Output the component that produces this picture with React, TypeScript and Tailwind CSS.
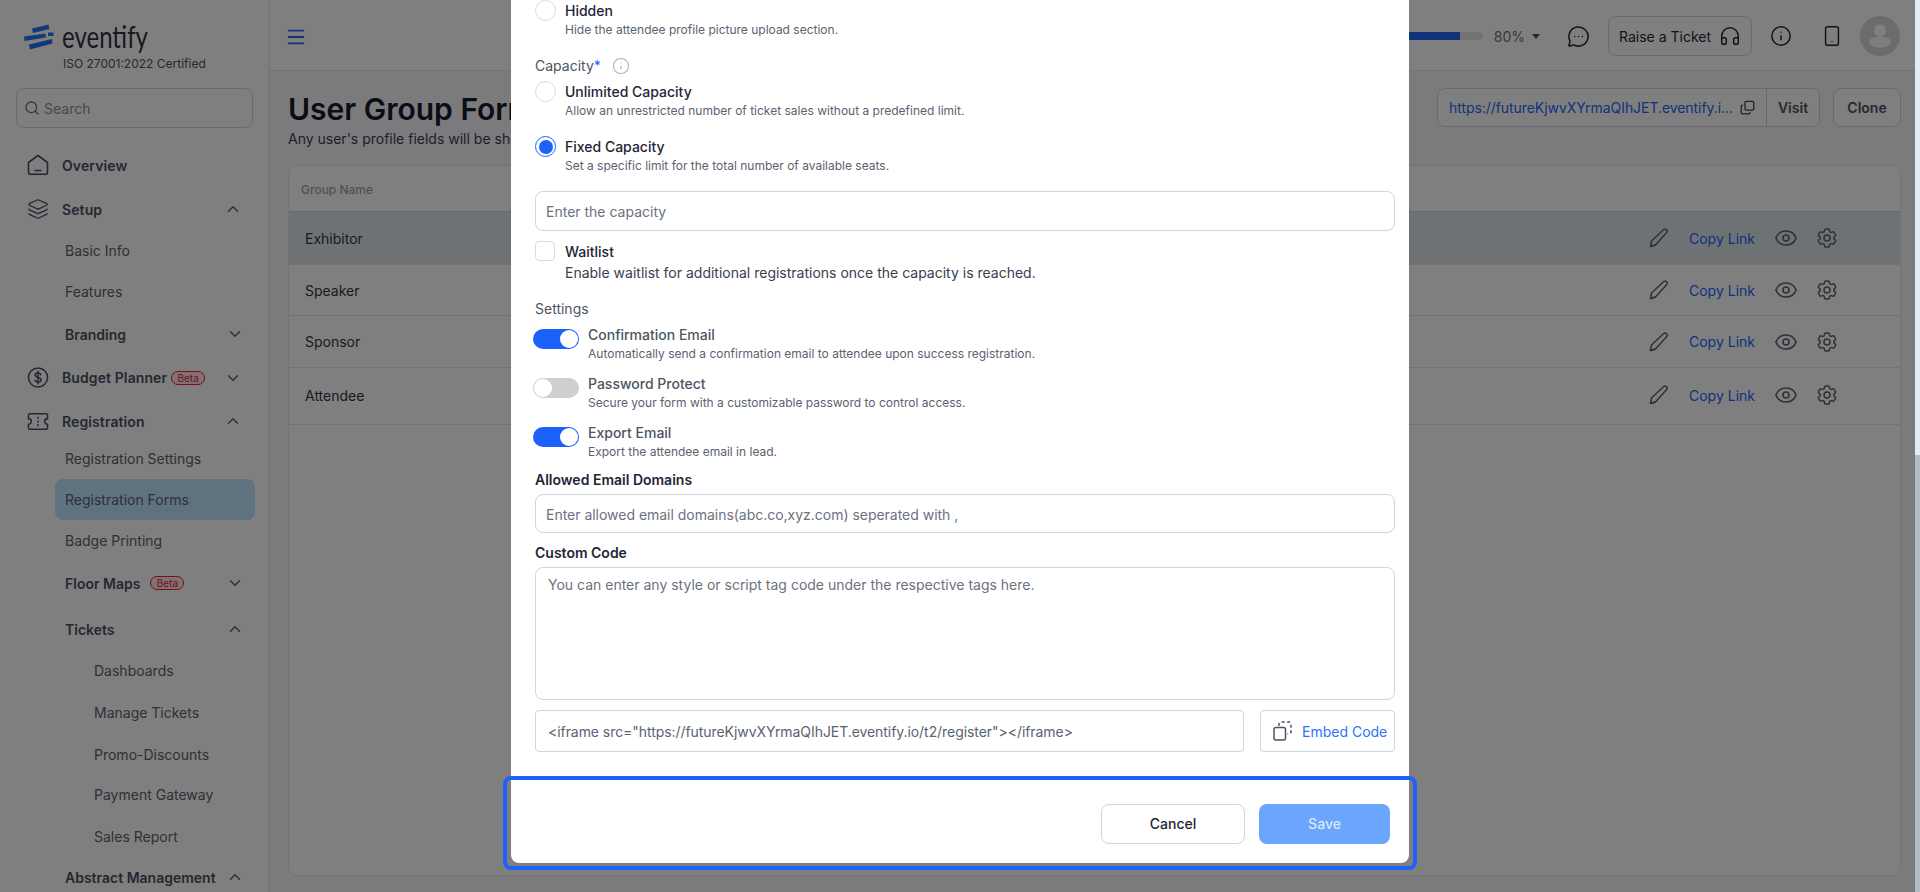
import { ChevronDown, ChevronUp, Copy, Eye, Headphones, Info, Layers, Menu, MessageCircleMore, Search, Smartphone } from "lucide-react";
import { HiOutlineCog6Tooth } from "react-icons/hi2";

function HomeIcon() {
	return (
		<svg width="22" height="22" viewBox="0 0 22 22" fill="none" stroke="#4a5164" strokeWidth="1.6" strokeLinejoin="round" strokeLinecap="round">
			<path d="M1.5 8.5 11 1.5l9.500 7v9.800a2 2 0 0 1-2 2h-15a2 2 0 0 1-2-2z" />
			<path d="M8 16.500h6" />
		</svg>
	);
}

function TicketIcon() {
	return (
		<svg width="23" height="19" viewBox="0 0 23 19" fill="none" stroke="#4a5164" strokeWidth="1.6" strokeLinejoin="round" strokeLinecap="round">
			<path d="M3 1.500h17a1.500 1.500 0 0 1 1.500 1.500v3.500a3 3 0 0 0 0 6V16a1.500 1.500 0 0 1-1.500 1.500H3A1.500 1.500 0 0 1 1.500 16v-3.500a3 3 0 0 0 0-6V3A1.500 1.500 0 0 1 3 1.500z" />
			<path d="M11.500 5v1M11.500 9v1M11.500 13v1" />
		</svg>
	);
}

function Logo() {
	return (
		<svg width="30" height="26" viewBox="0 0 30 26" fill="#2572f5">
			<polygon points="8,4.500 24.500,0.500 25.500,5 9,9" />
			<polygon points="0,12.500 21.500,9.500 22,13.500 0.500,17" />
			<polygon points="24,8.500 29.500,8.500 29.500,12 24,12" />
			<polygon points="5,20.500 28,15 28.500,19.500 6,25.500" />
		</svg>
	);
}

function PencilIcon() {
	return (
		<svg width="20" height="20" viewBox="0 0 20 20" fill="none" stroke="#5c6270" strokeWidth="1.500" strokeLinejoin="round">
			<path d="M1.500 18.500 2.500 13 14.500 1.700c.9-.8 2.200-.8 3 0 .8.900.8 2.200 0 3L6.500 17z" />
			<path d="M1.500 18.500 6.500 17" />
		</svg>
	);
}

function EmbedIcon() {
	return (
		<svg width="19" height="20" viewBox="0 0 19 20" fill="none" stroke="#4b5563" strokeWidth="1.500" strokeLinejoin="round">
			<rect x="1" y="6.500" width="11.500" height="12.500" rx="2" />
			<path d="M6 5V3a2 2 0 0 1 2-2h8a2 2 0 0 1 2 2v8a2 2 0 0 1-2 2h-1.500" strokeDasharray="3 2.500" />
		</svg>
	);
}

function Avatar() {
	return (
		<div className="w-[40px] h-[40px] rounded-full bg-[#d8d9dd] flex items-center justify-center overflow-hidden">
			<svg width="40" height="40" viewBox="0 0 40 40">
				<circle cx="20" cy="14.500" r="6" fill="#ffffff" />
				<ellipse cx="20" cy="26" rx="11" ry="5.500" fill="#ffffff" />
			</svg>
		</div>
	);
}

function Beta() {
	return <span className="ml-[4px] h-[14px] w-[34px] rounded-full border border-[#ef1c2e] bg-[#ffe4e6] text-[#ef1c2e] text-[10px] leading-[12px] text-center">Beta</span>;
}

function NavTop({ h, label, icon, open, beta }: { h: string; label: string; icon: React.ReactNode; open?: boolean; beta?: boolean }) {
	return (
		<div className={`${h} flex items-center pl-[27px] pr-[26px]`}>
			<div className="w-[22px] flex justify-center">{icon}</div>
			<span className="ml-[13px] text-[14px] font-semibold text-[#4a5164] tracking-[0.1px]">{label}</span>
			{beta && <Beta />}
			{open === true && <ChevronUp className="ml-auto" size={18} color="#5c6270" />}
			{open === false && <ChevronDown className="ml-auto" size={18} color="#5c6270" />}
		</div>
	);
}

function NavSub({ h, label, bold, open, beta, deep }: { h: string; label: string; bold?: boolean; open?: boolean; beta?: boolean; deep?: boolean }) {
	return (
		<div className={`${h} flex items-center ${deep ? "pl-[94px]" : "pl-[65px]"} pr-[24px]`}>
			<span className={`text-[14px] ${bold ? "font-semibold text-[#4a5164]" : "text-[#5c6270]"}`}>{label}</span>
			{beta && <span className="ml-[6px] flex"><Beta /></span>}
			{open === true && <ChevronUp className="ml-auto" size={18} color="#5c6270" />}
			{open === false && <ChevronDown className="ml-auto" size={18} color="#5c6270" />}
		</div>
	);
}

function Sidebar() {
	return (
		<aside className="w-[270px] shrink-0 h-full border-r-2 border-[#f0f0f4] bg-white overflow-hidden">
			<div className="h-[88px] pl-[24px] pt-[24px]">
				<div className="flex items-center gap-[8px] h-[26px]">
					<Logo />
					<span className="[font-family:Lato,sans-serif] text-[30px] leading-[26px] text-[#2f3442] origin-left scale-x-[0.8] -mt-[2px]">eventify</span>
				</div>
				<div className="ml-[39px] mt-[6px] text-[12px] leading-[16px] text-[#4a5164]">ISO 27001:2022 Certified</div>
			</div>
			<div className="mx-[16px] h-[40px] w-[237px] rounded-lg border border-[#d1d5db] flex items-center pl-[7px] gap-[4px]">
				<Search size={16} color="#6b7280" />
				<span className="text-[14px] text-[#8b919c]">Search</span>
			</div>
			<div className="mt-[19px]">
				<NavTop h="h-[36px]" label="Overview" icon={<HomeIcon />} />
				<NavTop h="h-[52px]" label="Setup" icon={<Layers size={26} color="#4a5164" strokeWidth={1.4} />} open />
				<NavSub h="h-[30px]" label="Basic Info" />
				<NavSub h="h-[52px]" label="Features" />
				<NavSub h="h-[34px]" label="Branding" bold open={false} />
				<NavTop h="h-[53px]" label="Budget Planner" icon={<svg width="23" height="23" viewBox="0 0 23 23" fill="none" stroke="#4a5164" strokeWidth="1.6" strokeLinecap="round"><circle cx="11.500" cy="11.500" r="10" /><path d="M14.500 8.500c-.5-1.200-1.600-1.800-3-1.800-1.800 0-3 .9-3 2.300 0 3.200 6.200 1.600 6.200 4.900 0 1.400-1.300 2.400-3.200 2.400-1.500 0-2.700-.7-3.200-1.900M11.500 5v13" /></svg>} beta open={false} />
				<NavTop h="h-[34px]" label="Registration" icon={<TicketIcon />} open />
				<NavSub h="h-[40px]" label="Registration Settings" />
				<div className="ml-[55px] mr-[13px] mt-[1px] h-[41px] rounded-lg bg-[#bfe5ff] pl-[10px] flex items-center text-[14px] text-[#5c6270]">Registration Forms</div>
				<NavSub h="h-[40px]" label="Badge Printing" />
				<NavSub h="h-[46px]" label="Floor Maps" bold beta open={false} />
				<NavSub h="h-[46px]" label="Tickets" bold open />
				<NavSub h="h-[36px]" label="Dashboards" deep />
				<NavSub h="h-[48px]" label="Manage Tickets" deep />
				<NavSub h="h-[36px]" label="Promo-Discounts" deep />
				<NavSub h="h-[44px]" label="Payment Gateway" deep />
				<NavSub h="h-[40px]" label="Sales Report" deep />
				<NavSub h="h-[42px]" label="Abstract Management" bold open />
			</div>
		</aside>
	);
}

function Header() {
	return (
		<div className="h-[71px] shrink-0 border-b border-[#e5e7eb] bg-white flex items-center pt-[2px] pl-[15px] pr-[15px]">
			<Menu className="mt-[1px]" size={22} color="#2266f5" />
			<div className="ml-auto w-[200px] h-[8px] rounded-full bg-[#e5e7eb] overflow-hidden">
				<div className="w-[177px] h-full bg-[#2266f5]" />
			</div>
			<span className="ml-[11px] text-[14px] text-[#6b7280]">80%</span>
			<span className="ml-[7px] w-0 h-0 border-x-[4px] border-x-transparent border-t-[5px] border-t-[#4b5563]" />
			<MessageCircleMore className="ml-[27px]" size={23} color="#1f2937" strokeWidth={1.6} />
			<div className="ml-[18px] w-[144px] h-[40px] rounded-lg border border-[#d1d5db] flex items-center pl-[10px] gap-[8px] text-[14px] text-[#1f2937]">
				Raise a Ticket
				<Headphones size={22} color="#1f2937" strokeWidth={1.6} />
			</div>
			<Info className="ml-[18px]" size={22} color="#1f2937" strokeWidth={1.6} />
			<Smartphone className="ml-[29px]" size={22} color="#1f2937" strokeWidth={1.6} />
			<div className="ml-[17px]"><Avatar /></div>
		</div>
	);
}

function TableRow({ name, h, active, cls }: { name: string; h: string; active?: boolean; cls?: string }) {
	return (
		<div className={`${h} ${cls ?? ""} flex items-center pl-[16px] pr-[61px] border-b border-[#e5e7eb] ${active ? "bg-[#dce4ea]" : ""}`}>
			<span className="text-[14px] text-[#2f3745]">{name}</span>
			<div className="ml-auto"><PencilIcon /></div>
			<span className="ml-[20px] text-[14px] text-[#2266f5]">Copy Link</span>
			<Eye className="ml-[19px]" size={24} color="#5c6270" strokeWidth={1.6} />
			<HiOutlineCog6Tooth className="ml-[17px] text-[#5c6270]" size={24} />
		</div>
	);
}

function Main() {
	return (
		<div className="flex-1 min-w-0 h-full flex flex-col bg-[#f7f7fa]">
			<Header />
			<div className="flex-1 pl-[18px] pr-[14px]">
				<div className="h-[94px] flex">
					<div className="pt-[19px]">
						<h1 className="text-[30px] leading-[38px] font-semibold text-[#141a2a]">User Group Forms</h1>
						<p className="mt-[1px] text-[14px] leading-[20px] text-[#374151]">Any user's profile fields will be shown here.</p>
					</div>
					<div className="ml-auto mt-[17px] flex gap-[13px]">
						<div className="h-[39px] w-[383px] rounded-lg border border-[#d1d5db] bg-white flex items-center pl-[11px]">
							<span className="text-[14px] text-[#2266f5] tracking-[-0.06px]">https://futureKjwvXYrmaQIhJET.eventify.i...</span>
							<Copy className="ml-[7px] -scale-y-100" size={15} color="#374151" />
							<span className="ml-auto w-[53px] h-full border-l border-[#d1d5db] flex items-center justify-center text-[14px] font-semibold text-[#4b5563]">Visit</span>
						</div>
						<div className="h-[39px] w-[68px] rounded-lg border border-[#d1d5db] bg-white flex items-center justify-center text-[14px] font-semibold text-[#4b5563]">Clone</div>
					</div>
				</div>
				<div className="h-[711px] rounded-lg border border-[#e5e7eb] bg-white">
					<div className="h-[46px] flex items-center pl-[12px] pt-[2px] border-b border-[#d1d5db] text-[12px] font-medium text-[#9ca3af]">Group Name</div>
					<TableRow name="Exhibitor" h="h-[53px]" active />
					<TableRow name="Speaker" h="h-[51px]" />
					<TableRow name="Sponsor" h="h-[52px]" />
					<TableRow name="Attendee" h="h-[57px]" cls="pb-[2px]" />
				</div>
			</div>
		</div>
	);
}

function Radio({ on }: { on?: boolean }) {
	return (
		<span className={`w-[21px] h-[21px] shrink-0 rounded-full border-[1.5px] flex items-center justify-center ${on ? "border-[#1c62fa]" : "border-[#d7dbe4]"}`}>
			{on && <span className="w-[14px] h-[14px] rounded-full bg-[#1c62fa]" />}
		</span>
	);
}

function RadioRow({ title, desc, on, cls }: { title: string; desc: string; on?: boolean; cls: string }) {
	return (
		<div className={`flex gap-[9px] ${cls}`}>
			<Radio on={on} />
			<div>
				<div className="text-[14px] leading-[22px] font-medium text-[#1e2636]">{title}</div>
				<div className="text-[12px] leading-[15px] text-[#5b6270]">{desc}</div>
			</div>
		</div>
	);
}

function ToggleRow({ title, desc, on, cls }: { title: string; desc: string; on?: boolean; cls: string }) {
	return (
		<div className={`flex gap-[9px] -ml-[2px] ${cls}`}>
			<span className={`mt-[4px] w-[46px] h-[20px] rounded-full flex items-center px-[1px] ${on ? "bg-[#1c62fa] justify-end" : "bg-[#cfcfcf]"}`}>
				<span className="w-[18px] h-[18px] rounded-full bg-white" />
			</span>
			<div>
				<div className="text-[14px] leading-[20px] font-medium text-[#4b5563]">{title}</div>
				<div className="text-[12px] leading-[18px] text-[#5b6270]">{desc}</div>
			</div>
		</div>
	);
}

function Modal() {
	return (
		<div className="absolute left-[511px] top-0 w-[898px] h-[863px] bg-white rounded-b-lg overflow-hidden">
			<div className="pl-[24px] pr-[14px]">
				<RadioRow title="Hidden" desc="Hide the attendee profile picture upload section." cls="" />
				<div className="mt-[19px] flex items-center text-[14px] leading-[20px] text-[#4b5563]">
					Capacity<span className="text-[#1c62fa]">*</span>
					<Info className="ml-[11px]" size={18} color="#a9b4c6" strokeWidth={1.5} />
				</div>
				<RadioRow title="Unlimited Capacity" desc="Allow an unrestricted number of ticket sales without a predefined limit." cls="mt-[5px]" />
				<RadioRow title="Fixed Capacity" desc="Set a specific limit for the total number of available seats." on cls="mt-[18px]" />
				<div className="mt-[18px] h-[40px] rounded-lg border border-[#d1d5e0] flex items-center pl-[10px] text-[14px] text-[#6b7280]">Enter the capacity</div>
				<div className="mt-[10px] flex gap-[10px]">
					<span className="w-[20px] h-[20px] rounded border border-[#d7dbe4]" />
					<div>
						<div className="text-[14px] leading-[22px] font-medium text-[#1e2636]">Waitlist</div>
						<div className="text-[14px] leading-[20px] text-[#374151]">Enable waitlist for additional registrations once the capacity is reached.</div>
					</div>
				</div>
				<div className="mt-[16px] text-[14px] leading-[20px] text-[#4b5563]">Settings</div>
				<ToggleRow title="Confirmation Email" desc="Automatically send a confirmation email to attendee upon success registration." on cls="mt-[6px]" />
				<ToggleRow title="Password Protect" desc="Secure your form with a customizable password to control access." cls="mt-[11px]" />
				<ToggleRow title="Export Email" desc="Export the attendee email in lead." on cls="mt-[11px]" />
				<div className="mt-[9px] text-[14px] leading-[20px] font-semibold text-[#1e2636]">Allowed Email Domains</div>
				<div className="mt-[4px] h-[39px] rounded-lg border border-[#d1d5e0] flex items-center pl-[10px] pt-[1px] text-[14px] text-[#6b7280] tracking-[-0.02px]">Enter allowed email domains(abc.co,xyz.com) seperated with ,</div>
				<div className="mt-[10px] text-[14px] leading-[20px] font-semibold text-[#1e2636]">Custom Code</div>
				<div className="mt-[4px] h-[133px] rounded-lg border border-[#d1d5e0] pl-[12px] pt-[7px] text-[14px] leading-[20px] text-[#6b7280]">You can enter any style or script tag code under the respective tags here.</div>
				<div className="mt-[10px] flex justify-between">
					<div className="w-[709px] h-[42px] rounded border border-[#d1d5e0] flex items-center pl-[12px] text-[14px] text-[#5b6270] tracking-[-0.06px]">{'<iframe src="https://futureKjwvXYrmaQIhJET.eventify.io/t2/register"></iframe>'}</div>
					<div className="w-[135px] h-[42px] rounded border border-[#d1d5e0] flex items-center pl-[12px] gap-[10px] text-[14px] text-[#2f72f7]">
						<EmbedIcon />
						Embed Code
					</div>
				</div>
			</div>
			<div className="mt-[52px] flex justify-end gap-[14px] pr-[19px]">
				<div className="w-[144px] h-[40px] rounded-lg border border-[#d1d5e0] flex items-center justify-center pb-[1px] text-[14px] font-medium text-[#1e2636]">Cancel</div>
				<div className="w-[131px] h-[40px] rounded-lg bg-[#6ba5fd] flex items-center justify-center pb-[1px] text-[14px] font-medium text-[#dce8fe]">Save</div>
			</div>
		</div>
	);
}

export default function App() {
	return (
		<div className="w-full h-[892px] overflow-hidden flex [font-family:Inter,sans-serif]">
			<div className="relative w-[1915px] h-full flex overflow-hidden">
				<Sidebar />
				<Main />
				<div className="absolute inset-0 bg-black/50" />
				<Modal />
				<div className="absolute left-[503px] top-[776px] w-[914px] h-[94px] rounded-lg border-[4px] border-[#1c62fa]" />
			</div>
			<div className="w-[5px] h-full flex flex-col">
				<div className="h-[455px] bg-[#e3ebf4]" />
				<div className="flex-1 bg-[#b5bcc6]" />
			</div>
		</div>
	);
}
